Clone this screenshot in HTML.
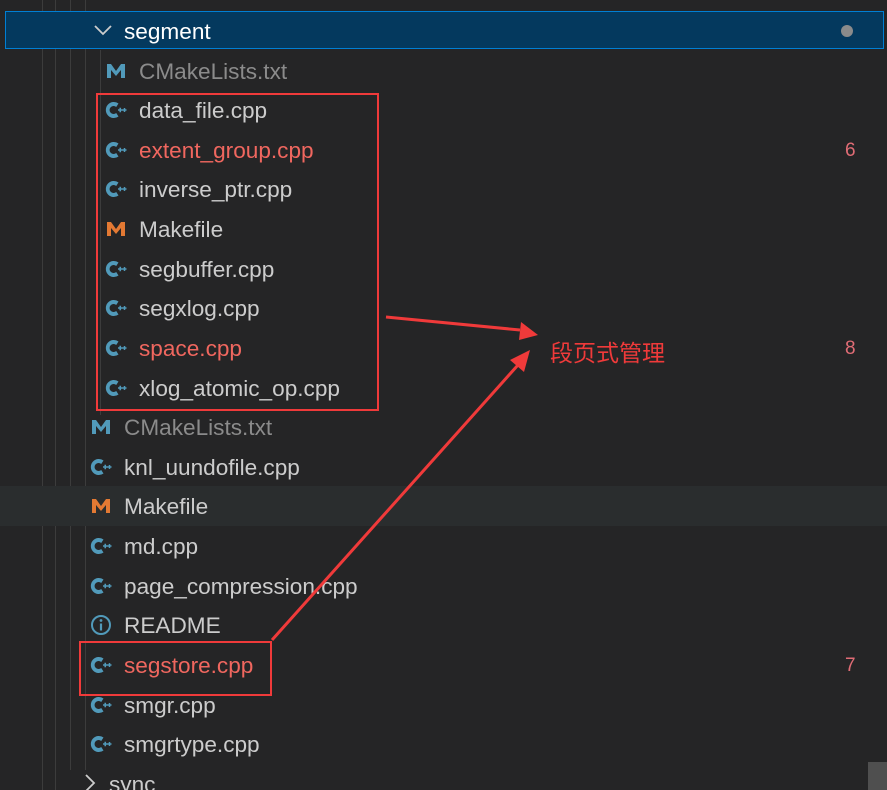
<!DOCTYPE html><html><head><style>
html,body{margin:0;width:887px;height:790px;overflow:hidden;}
body{background:#252526;position:relative;font-family:"Liberation Sans","Noto Sans CJK SC",sans-serif;}
.r{position:absolute;left:0;width:887px;height:40px;line-height:42px;font-size:22.6px;color:#cccccc;}
.t{position:absolute;}
.ic{position:absolute;top:10px}
.red{color:#f0675f}.dim{color:#8b8b8b}
.g{position:absolute;width:1px;background:#3c3c3c}
.n{position:absolute;left:845px;color:#e06c75;font-size:19px}
</style></head><body>
<svg width="0" height="0" style="position:absolute"><defs>
<symbol id="cp" viewBox="0 0 22 20"><path d="M13.5 3.5 A8 8 0 1 0 13.5 16.5 L11.2 13 A4 4 0 1 1 11.2 7 Z" fill="#519aba"/><path d="M13 10h4.5M15.25 7.8v4.4" stroke="#519aba" stroke-width="1.6"/><path d="M17.5 10h4M19.5 8v4" stroke="#519aba" stroke-width="1.5"/></symbol>
<symbol id="mm" viewBox="0 0 20 20"><path d="M1 17V3h4l5 7 5-7h4v14h-4V9l-5 6-5-6v8z"/></symbol>
</defs></svg>
<div class="g" style="left:42px;top:0;height:790px"></div>
<div class="g" style="left:55px;top:0;height:790px"></div>
<div class="g" style="left:70px;top:0;height:770px"></div>
<div class="g" style="left:85px;top:0;height:770px"></div>
<div class="g" style="left:100px;top:50px;height:365px"></div>
<div style="position:absolute;left:5px;top:11px;width:879px;height:38px;background:#04395e;border:1px solid #007fd4;box-sizing:border-box"></div>
<div style="position:absolute;left:0;top:486px;width:887px;height:40px;background:#2a2d2e"></div>
<div class="r" style="top:11px"><svg style="position:absolute;left:94px;top:13px" width="18" height="12"><path d="M1 2 L9 10 L17 2" stroke="#ccc" stroke-width="1.8" fill="none"/></svg><span class="t" style="left:124px;color:#fff">segment</span><span style="position:absolute;left:841px;top:14px;width:12px;height:12px;border-radius:6px;background:#8b8b8b"></span></div>
<div class="r" style="top:51px"><svg class="ic" style="left:106px" width="20" height="20" fill="#519aba"><use href="#mm"/></svg><span class="t dim" style="left:139px">CMakeLists.txt</span></div>
<div class="r" style="top:90px"><svg class="ic" style="left:105px" width="22" height="20"><use href="#cp"/></svg><span class="t" style="left:139px">data_file.cpp</span></div>
<div class="r" style="top:130px"><svg class="ic" style="left:105px" width="22" height="20"><use href="#cp"/></svg><span class="t red" style="left:139px">extent_group.cpp</span><span class="n">6</span></div>
<div class="r" style="top:169px"><svg class="ic" style="left:105px" width="22" height="20"><use href="#cp"/></svg><span class="t" style="left:139px">inverse_ptr.cpp</span></div>
<div class="r" style="top:209px"><svg class="ic" style="left:106px" width="20" height="20" fill="#e37933"><use href="#mm"/></svg><span class="t" style="left:139px">Makefile</span></div>
<div class="r" style="top:249px"><svg class="ic" style="left:105px" width="22" height="20"><use href="#cp"/></svg><span class="t" style="left:139px">segbuffer.cpp</span></div>
<div class="r" style="top:288px"><svg class="ic" style="left:105px" width="22" height="20"><use href="#cp"/></svg><span class="t" style="left:139px">segxlog.cpp</span></div>
<div class="r" style="top:328px"><svg class="ic" style="left:105px" width="22" height="20"><use href="#cp"/></svg><span class="t red" style="left:139px">space.cpp</span><span class="n">8</span></div>
<div class="r" style="top:368px"><svg class="ic" style="left:105px" width="22" height="20"><use href="#cp"/></svg><span class="t" style="left:139px">xlog_atomic_op.cpp</span></div>
<div class="r" style="top:407px"><svg class="ic" style="left:91px" width="20" height="20" fill="#519aba"><use href="#mm"/></svg><span class="t dim" style="left:124px">CMakeLists.txt</span></div>
<div class="r" style="top:447px"><svg class="ic" style="left:90px" width="22" height="20"><use href="#cp"/></svg><span class="t" style="left:124px">knl_uundofile.cpp</span></div>
<div class="r" style="top:486px"><svg class="ic" style="left:91px" width="20" height="20" fill="#e37933"><use href="#mm"/></svg><span class="t" style="left:124px">Makefile</span></div>
<div class="r" style="top:526px"><svg class="ic" style="left:90px" width="22" height="20"><use href="#cp"/></svg><span class="t" style="left:124px">md.cpp</span></div>
<div class="r" style="top:566px"><svg class="ic" style="left:90px" width="22" height="20"><use href="#cp"/></svg><span class="t" style="left:124px">page_compression.cpp</span></div>
<div class="r" style="top:605px"><svg class="ic" style="left:90px" width="22" height="22"><circle cx="11" cy="10" r="9" stroke="#519aba" stroke-width="2" fill="none"/><circle cx="11" cy="5.5" r="1.4" fill="#519aba"/><path d="M11 8.5v7" stroke="#519aba" stroke-width="2.2"/></svg><span class="t" style="left:124px">README</span></div>
<div class="r" style="top:645px"><svg class="ic" style="left:90px" width="22" height="20"><use href="#cp"/></svg><span class="t red" style="left:124px">segstore.cpp</span><span class="n">7</span></div>
<div class="r" style="top:685px"><svg class="ic" style="left:90px" width="22" height="20"><use href="#cp"/></svg><span class="t" style="left:124px">smgr.cpp</span></div>
<div class="r" style="top:724px"><svg class="ic" style="left:90px" width="22" height="20"><use href="#cp"/></svg><span class="t" style="left:124px">smgrtype.cpp</span></div>
<div class="r" style="top:764px"><svg style="position:absolute;left:84px;top:10px" width="12" height="18"><path d="M2 1 L10 9 L2 17" stroke="#ccc" stroke-width="1.8" fill="none"/></svg><span class="t" style="left:109px">sync</span></div>
<div style="position:absolute;left:868px;top:762px;width:19px;height:28px;background:#4f4f4f"></div>
<div style="position:absolute;left:96px;top:93px;width:283px;height:318px;border:2px solid #f03a3a;box-sizing:border-box"></div>
<div style="position:absolute;left:79px;top:641px;width:193px;height:55px;border:2px solid #f03a3a;box-sizing:border-box"></div>
<svg style="position:absolute;left:0;top:0" width="887" height="790">
<path d="M386 317 L520 330" stroke="#f03a3a" stroke-width="3"/>
<path d="M538 335 L521 322 L519 340 Z" fill="#f03a3a"/>
<path d="M272 640 L518 365" stroke="#f03a3a" stroke-width="3"/>
<path d="M530 350 L510 360 L524 372 Z" fill="#f03a3a"/>
</svg>
<div style="position:absolute;left:550px;top:334px;font-size:23px;color:#f03a3a;font-family:'Noto Sans CJK SC',sans-serif">段页式管理</div>
</body></html>
